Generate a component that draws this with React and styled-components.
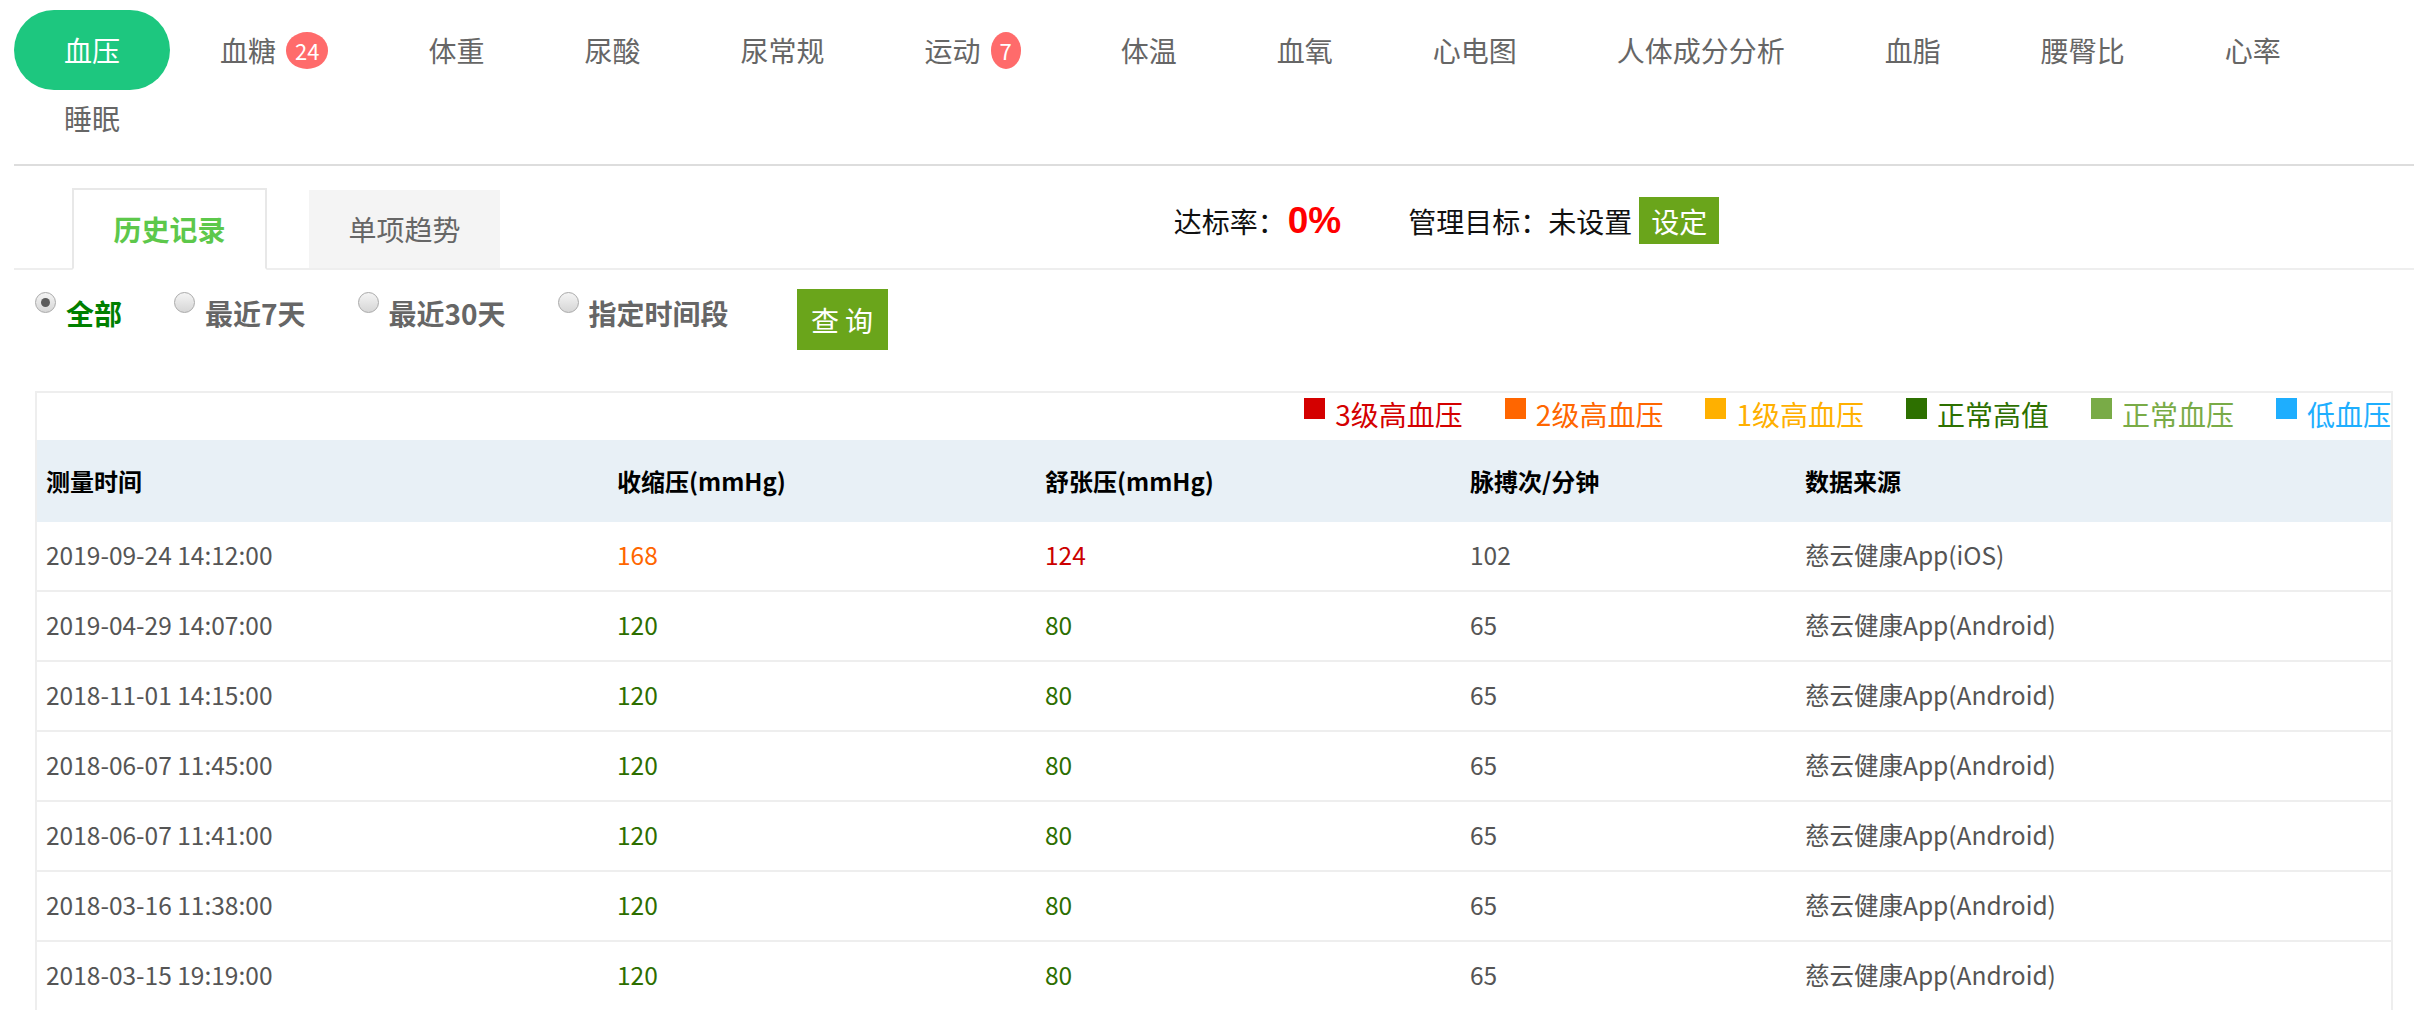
import React from "react";
import styled, { createGlobalStyle } from "styled-components";

const GlobalStyle = createGlobalStyle`
  body {
    margin: 0;
    background: #fff;
    font-family: "Noto Sans CJK SC", "Liberation Sans", sans-serif;
  }
`;

const Page = styled.div`
  padding: 0 5px 0 14px;
`;

const NavBar = styled.div`
  display: flex;
  flex-wrap: wrap;
  padding: 16px 0 12px;
  border-bottom: 2px solid #ddd;
`;

const NavItem = styled.div`
  display: flex;
  align-items: center;
  height: ${({ active }) => (active ? "80px" : "68px")};
  margin: ${({ active }) => (active ? "-6px 0" : 0)};
  padding: 0 50px;
  border-radius: 40px;
  background: ${({ active }) => (active ? "#1dc77f" : "transparent")};
  color: ${({ active }) => (active ? "#fff" : "#666")};
  font-size: 28px;
  cursor: pointer;
`;

const Badge = styled.span`
  display: inline-flex;
  align-items: center;
  justify-content: center;
  min-width: 12px;
  height: 37px;
  padding: 0 9px;
  margin-left: 10px;
  border-radius: 50%;
  background: #ff6b6b;
  color: #fff;
  font-size: 22px;
`;

const TabRow = styled.div`
  display: flex;
  align-items: flex-end;
  margin-top: 22px;
  border-bottom: 2px solid #eee;
`;

const Tabs = styled.div`
  display: flex;
  align-items: flex-end;
  gap: 42px;
  margin-left: 58px;
`;

const Tab = styled.div`
  display: flex;
  align-items: center;
  justify-content: center;
  box-sizing: border-box;
  width: ${({ active }) => (active ? "195px" : "191px")};
  height: ${({ active }) => (active ? "82px" : "78px")};
  margin-bottom: ${({ active }) => (active ? "-2px" : 0)};
  border: ${({ active }) => (active ? "2px solid #e8e8e8" : "none")};
  border-bottom: ${({ active }) => (active ? "2px solid #fff" : "none")};
  background: ${({ active }) => (active ? "#fff" : "#f4f4f4")};
  color: ${({ active }) => (active ? "#5dc84b" : "#666")};
  font-size: 28px;
  font-weight: ${({ active }) => (active ? 700 : 400)};
`;

const Stats = styled.div`
  flex: 1;
  align-self: flex-start;
  display: flex;
  align-items: center;
  justify-content: center;
  margin-top: 9px;
  padding-right: 21px;
  font-size: 28px;
  color: #111;
`;

const Rate = styled.span`
  margin-left: 2px;
  color: #f00;
  font-family: "Liberation Sans", Arial, sans-serif;
  font-size: 37px;
  font-weight: 700;
`;

const Goal = styled.span`
  margin-left: 67px;
`;

const GreenButton = styled.button`
  border: none;
  padding: 0;
  background: #6aa51b;
  color: #fff;
  font-family: inherit;
  font-size: 28px;
  cursor: pointer;
`;

const SetButton = styled(GreenButton)`
  width: 80px;
  height: 47px;
  margin-left: 7px;
`;

const QueryButton = styled(GreenButton)`
  width: 91px;
  height: 61px;
  margin-left: 16px;
  letter-spacing: 6px;
  text-indent: 6px;
`;

const Content = styled.div`
  padding: 0 21px;
`;

const FilterRow = styled.div`
  display: flex;
  align-items: flex-start;
  margin-top: 19px;
`;

const RadioItem = styled.label`
  display: flex;
  align-items: flex-start;
  margin-top: 4px;
  margin-right: 52px;
  cursor: pointer;
`;

const RadioCircle = styled.span`
  position: relative;
  box-sizing: border-box;
  width: 21px;
  height: 21px;
  margin-top: -1px;
  margin-right: 10px;
  border: 1px solid #a9a9a9;
  border-radius: 50%;
  background: linear-gradient(#f4f4f4, #d6d6d6);

  &::after {
    content: "";
    display: ${({ checked }) => (checked ? "block" : "none")};
    position: absolute;
    left: 50%;
    top: 50%;
    width: 9px;
    height: 9px;
    margin: -4.5px 0 0 -4.5px;
    border-radius: 50%;
    background: #5b5b5b;
  }
`;

const RadioLabel = styled.span`
  line-height: 40px;
  font-size: 28px;
  font-weight: 700;
  color: ${({ checked }) => (checked ? "#008000" : "#666")};
`;

const TableBox = styled.div`
  margin-top: 41px;
  border: 2px solid #eee;
  border-bottom: none;
`;

const Legend = styled.div`
  display: flex;
  justify-content: flex-end;
  align-items: center;
  box-sizing: border-box;
  height: 47px;
  padding-bottom: 5px;
`;

const LegendItem = styled.div`
  display: flex;
  align-items: center;
  margin-left: 42px;
  color: ${({ color }) => color};
  font-size: 28px;
`;

const LegendSwatch = styled.span`
  width: 21px;
  height: 21px;
  margin-right: 10px;
  margin-top: -11px;
  background: ${({ color }) => color};
`;

const Row = styled.div`
  display: grid;
  grid-template-columns: 571px 428px 425px 335px 1fr;
  align-items: center;
  box-sizing: border-box;
  height: ${({ head }) => (head ? "82px" : "70px")};
  padding-bottom: ${({ head }) => (head ? "2px" : "4px")};
  border-bottom: ${({ head }) => (head ? "none" : "2px solid #eee")};
  background: ${({ head }) => (head ? "#e8f0f6" : "#fff")};
`;

const Cell = styled.div`
  padding-left: 9px;
  font-size: ${({ head }) => (head ? "24px" : "24.5px")};
  font-weight: ${({ head }) => (head ? 700 : 400)};
  color: ${({ color }) => color || "#555"};
`;

const navItems = [
  { name: "血压", active: true },
  { name: "血糖", badge: 24 },
  { name: "体重" },
  { name: "尿酸" },
  { name: "尿常规" },
  { name: "运动", badge: 7 },
  { name: "体温" },
  { name: "血氧" },
  { name: "心电图" },
  { name: "人体成分分析" },
  { name: "血脂" },
  { name: "腰臀比" },
  { name: "心率" },
  { name: "睡眠" }
];

const filters = ["全部", "最近7天", "最近30天", "指定时间段"];

const legend = [
  { label: "3级高血压", color: "#d40000" },
  { label: "2级高血压", color: "#ff6600" },
  { label: "1级高血压", color: "#ffb000" },
  { label: "正常高值", color: "#2d7000" },
  { label: "正常血压", color: "#79ab47" },
  { label: "低血压", color: "#1eaefe" }
];

const NORMAL = "#2d6e00";

const records = [
  { time: "2019-09-24 14:12:00", sys: 168, sysColor: "#ff6600", dia: 124, diaColor: "#cc0000", pulse: 102, source: "慈云健康App(iOS)" },
  { time: "2019-04-29 14:07:00", sys: 120, dia: 80, pulse: 65, source: "慈云健康App(Android)" },
  { time: "2018-11-01 14:15:00", sys: 120, dia: 80, pulse: 65, source: "慈云健康App(Android)" },
  { time: "2018-06-07 11:45:00", sys: 120, dia: 80, pulse: 65, source: "慈云健康App(Android)" },
  { time: "2018-06-07 11:41:00", sys: 120, dia: 80, pulse: 65, source: "慈云健康App(Android)" },
  { time: "2018-03-16 11:38:00", sys: 120, dia: 80, pulse: 65, source: "慈云健康App(Android)" },
  { time: "2018-03-15 19:19:00", sys: 120, dia: 80, pulse: 65, source: "慈云健康App(Android)" }
];

const App = () => {
  return (
    <>
      <GlobalStyle />
      <Page>
        <NavBar>
          {navItems.map((item) => (
            <NavItem key={item.name} active={item.active}>
              {item.name}
              {item.badge && <Badge>{item.badge}</Badge>}
            </NavItem>
          ))}
        </NavBar>

        <TabRow>
          <Tabs>
            <Tab active>历史记录</Tab>
            <Tab>单项趋势</Tab>
          </Tabs>
          <Stats>
            <span>达标率：</span>
            <Rate>0%</Rate>
            <Goal>管理目标：未设置</Goal>
            <SetButton>设定</SetButton>
          </Stats>
        </TabRow>

        <Content>
          <FilterRow>
            {filters.map((label, i) => (
              <RadioItem key={label}>
                <RadioCircle checked={i === 0} />
                <RadioLabel checked={i === 0}>{label}</RadioLabel>
              </RadioItem>
            ))}
            <QueryButton>查询</QueryButton>
          </FilterRow>

          <TableBox>
            <Legend>
              {legend.map((item) => (
                <LegendItem key={item.label} color={item.color}>
                  <LegendSwatch color={item.color} />
                  {item.label}
                </LegendItem>
              ))}
            </Legend>
            <Row head>
              <Cell head color="#000">测量时间</Cell>
              <Cell head color="#000">收缩压(mmHg)</Cell>
              <Cell head color="#000">舒张压(mmHg)</Cell>
              <Cell head color="#000">脉搏次/分钟</Cell>
              <Cell head color="#000">数据来源</Cell>
            </Row>
            {records.map((r) => (
              <Row key={r.time}>
                <Cell>{r.time}</Cell>
                <Cell color={r.sysColor || NORMAL}>{r.sys}</Cell>
                <Cell color={r.diaColor || NORMAL}>{r.dia}</Cell>
                <Cell>{r.pulse}</Cell>
                <Cell>{r.source}</Cell>
              </Row>
            ))}
          </TableBox>
        </Content>
      </Page>
    </>
  );
};

export default App;
